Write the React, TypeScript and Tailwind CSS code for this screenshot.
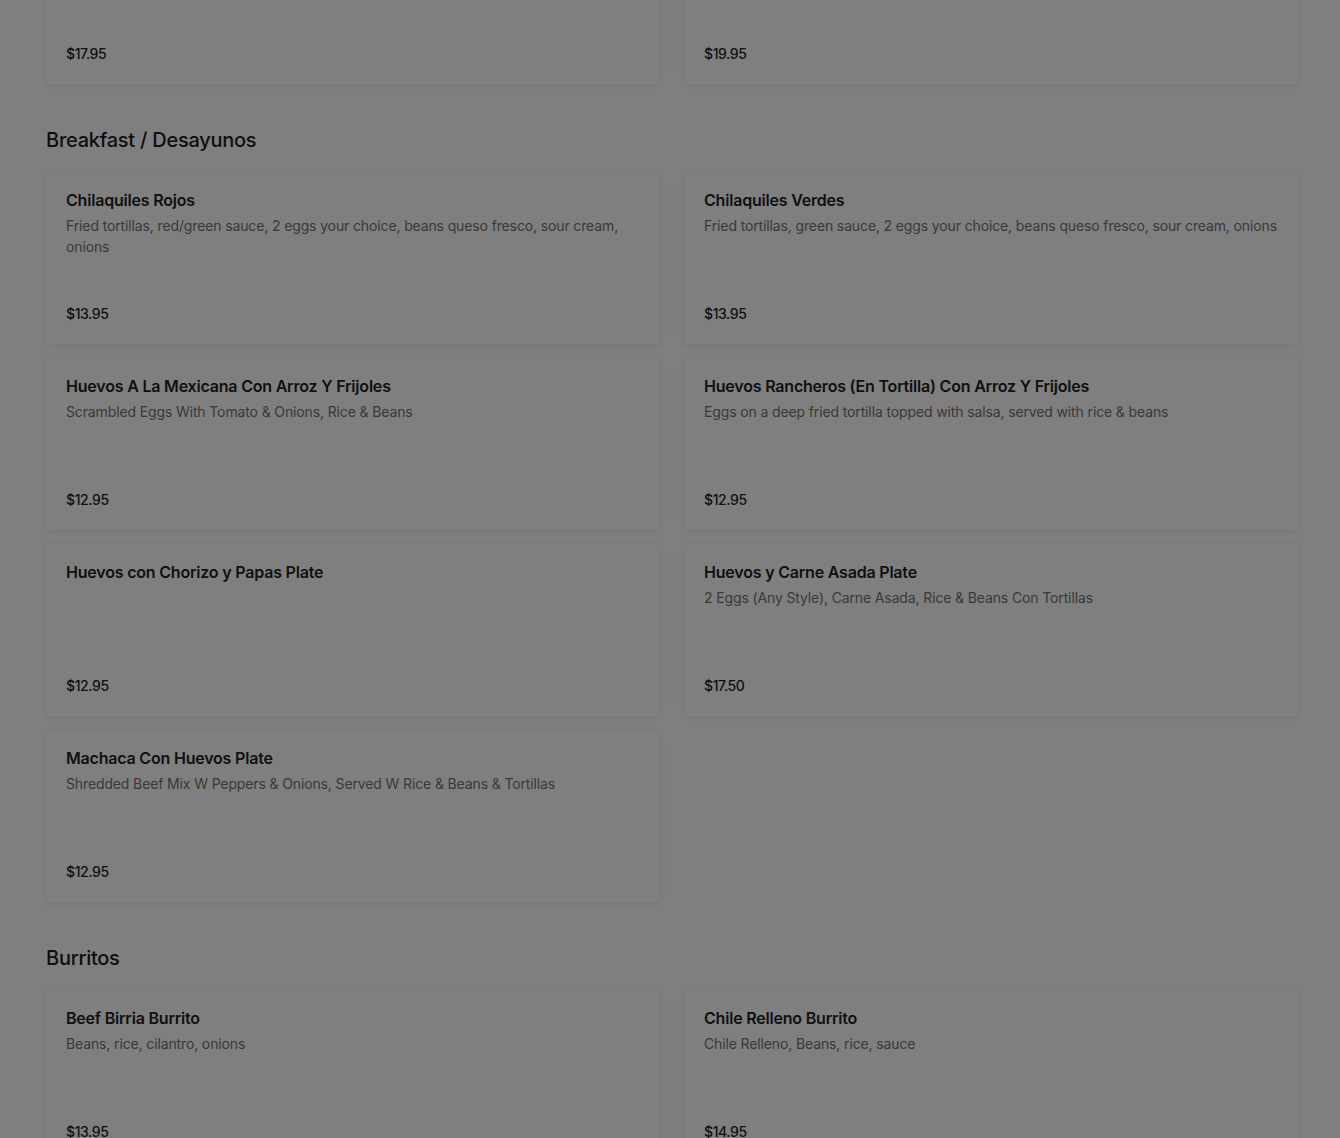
import React from "react";

type Item = { name?: string; desc?: string; price: string };

const top: Item[] = [{ price: "$17.95" }, { price: "$19.95" }];

const breakfast: Item[] = [
  {
    name: "Chilaquiles Rojos",
    desc: "Fried tortillas, red/green sauce, 2 eggs your choice, beans queso fresco, sour cream, onions",
    price: "$13.95",
  },
  {
    name: "Chilaquiles Verdes",
    desc: "Fried tortillas, green sauce, 2 eggs your choice, beans queso fresco, sour cream, onions",
    price: "$13.95",
  },
  {
    name: "Huevos A La Mexicana Con Arroz Y Frijoles",
    desc: "Scrambled Eggs With Tomato & Onions, Rice & Beans",
    price: "$12.95",
  },
  {
    name: "Huevos Rancheros (En Tortilla) Con Arroz Y Frijoles",
    desc: "Eggs on a deep fried tortilla topped with salsa, served with rice & beans",
    price: "$12.95",
  },
  { name: "Huevos con Chorizo y Papas Plate", price: "$12.95" },
  {
    name: "Huevos y Carne Asada Plate",
    desc: "2 Eggs (Any Style), Carne Asada, Rice & Beans Con Tortillas",
    price: "$17.50",
  },
  {
    name: "Machaca Con Huevos Plate",
    desc: "Shredded Beef Mix W Peppers & Onions, Served W Rice & Beans & Tortillas",
    price: "$12.95",
  },
];

const burritos: Item[] = [
  { name: "Beef Birria Burrito", desc: "Beans, rice, cilantro, onions", price: "$13.95" },
  { name: "Chile Relleno Burrito", desc: "Chile Relleno, Beans, rice, sauce", price: "$14.95" },
];

function Card({ item }: { item: Item }) {
  return (
    <div className="flex h-[172px] flex-col rounded-[4px] bg-white px-5 pb-5 pt-4 shadow-[0_1px_6px_rgba(0,0,0,0.10)]">
      {item.name && (
        <div className="text-[16px] font-semibold leading-6 tracking-[-0.2px] text-[#222]">
          {item.name}
        </div>
      )}
      {item.desc && (
        <div className="mt-[3px] text-[14px] leading-[21px] tracking-[-0.13px] text-[#727272]">
          {item.desc}
        </div>
      )}
      <div className="mt-auto text-[14px] font-medium leading-5 tracking-[-0.4px] text-[#222]">
        {item.price}
      </div>
    </div>
  );
}

function Grid({ items }: { items: Item[] }) {
  return (
    <div className="grid grid-cols-2 gap-x-6 gap-y-[14px]">
      {items.map((it, i) => (
        <Card key={i} item={it} />
      ))}
    </div>
  );
}

function Section({ title, items }: { title: string; items: Item[] }) {
  return (
    <section className="mt-[42px]">
      <h2 className="mb-[18px] text-[20px] font-medium leading-7 tracking-[-0.25px] text-[#1c1c1c]">
        {title}
      </h2>
      <Grid items={items} />
    </section>
  );
}

export default function App() {
  return (
    <div
      className="relative h-[1138px] w-full overflow-hidden bg-white"
      style={{ fontFamily: "Inter, 'Noto Sans', sans-serif" }}
    >
      <div className="-mt-[88px] pl-[46px] pr-[42px]">
        <Grid items={top} />
        <Section title="Breakfast / Desayunos" items={breakfast} />
        <Section title="Burritos" items={burritos} />
      </div>
      <div className="absolute inset-0 bg-black/50" />
    </div>
  );
}
